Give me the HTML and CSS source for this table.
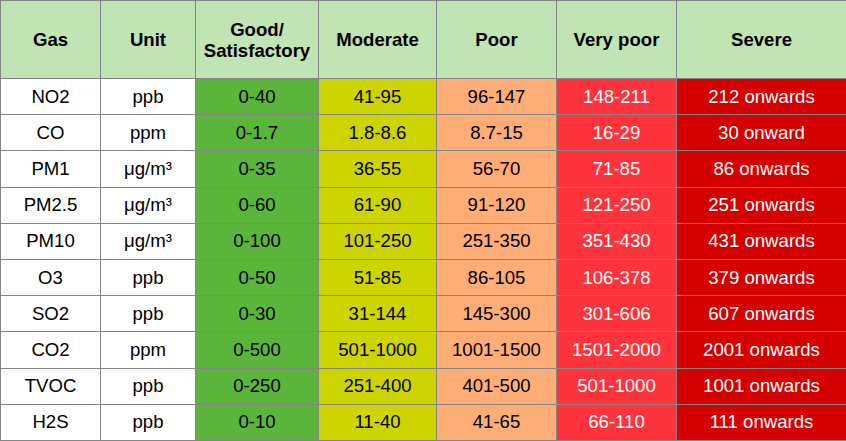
FILE: index.html
```html
<!DOCTYPE html>
<html lang="en">
<head>
<meta charset="utf-8">
<title>Gas levels</title>
<link rel="stylesheet" href="styles.css">
</head>
<body>
<table class="aqi">
  <colgroup>
    <col class="c-gas"><col class="c-unit"><col class="c-good"><col class="c-mod"><col class="c-poor"><col class="c-vpoor"><col class="c-sev">
  </colgroup>
  <thead>
    <tr>
      <th>Gas</th><th>Unit</th><th>Good/<br>Satisfactory</th><th>Moderate</th><th>Poor</th><th>Very poor</th><th>Severe</th>
    </tr>
  </thead>
  <tbody>
    <tr><td>NO2</td><td>ppb</td><td class="good">0-40</td><td class="mod">41-95</td><td class="poor">96-147</td><td class="vpoor">148-211</td><td class="sev">212 onwards</td></tr>
    <tr><td>CO</td><td>ppm</td><td class="good">0-1.7</td><td class="mod">1.8-8.6</td><td class="poor">8.7-15</td><td class="vpoor">16-29</td><td class="sev">30 onward</td></tr>
    <tr><td>PM1</td><td>μg/m³</td><td class="good">0-35</td><td class="mod">36-55</td><td class="poor">56-70</td><td class="vpoor">71-85</td><td class="sev">86 onwards</td></tr>
    <tr><td>PM2.5</td><td>μg/m³</td><td class="good">0-60</td><td class="mod">61-90</td><td class="poor">91-120</td><td class="vpoor">121-250</td><td class="sev">251 onwards</td></tr>
    <tr><td>PM10</td><td>μg/m³</td><td class="good">0-100</td><td class="mod">101-250</td><td class="poor">251-350</td><td class="vpoor">351-430</td><td class="sev">431 onwards</td></tr>
    <tr><td>O3</td><td>ppb</td><td class="good">0-50</td><td class="mod">51-85</td><td class="poor">86-105</td><td class="vpoor">106-378</td><td class="sev">379 onwards</td></tr>
    <tr><td>SO2</td><td>ppb</td><td class="good">0-30</td><td class="mod">31-144</td><td class="poor">145-300</td><td class="vpoor">301-606</td><td class="sev">607 onwards</td></tr>
    <tr><td>CO2</td><td>ppm</td><td class="good">0-500</td><td class="mod">501-1000</td><td class="poor">1001-1500</td><td class="vpoor">1501-2000</td><td class="sev">2001 onwards</td></tr>
    <tr><td>TVOC</td><td>ppb</td><td class="good">0-250</td><td class="mod">251-400</td><td class="poor">401-500</td><td class="vpoor">501-1000</td><td class="sev">1001 onwards</td></tr>
    <tr><td>H2S</td><td>ppb</td><td class="good">0-10</td><td class="mod">11-40</td><td class="poor">41-65</td><td class="vpoor">66-110</td><td class="sev">111 onwards</td></tr>
  </tbody>
</table>
</body>
</html>
```

FILE: styles.css
```css
html, body {
  margin: 0;
  padding: 0;
  background: #ffffff;
}

.aqi {
  border-collapse: collapse;
  table-layout: fixed;
  width: 846px;
  height: 441px;
  font-family: "Liberation Sans", Arial, sans-serif;
  font-size: 18.6px;
  color: #000000;
}

.c-gas { width: 100px; }
.c-unit { width: 95px; }
.c-good { width: 123px; }
.c-mod { width: 118px; }
.c-poor { width: 120px; }
.c-vpoor { width: 120px; }
.c-sev { width: 170px; }

.aqi th,
.aqi td {
  border: 1px solid #858585;
  padding: 0;
  text-align: center;
  vertical-align: middle;
}

.aqi th {
  background: #c1e4b5;
  font-weight: bold;
  height: 77px;
  line-height: 21px;
}

.aqi td {
  height: 35px;
  line-height: 20px;
  background: #ffffff;
}

.aqi td.good { background: #5bb53a; }
.aqi td.mod { background: #cdd400; }
.aqi td.poor { background: #ffad76; }
.aqi td.vpoor { background: #ff333b; color: #ffffff; }
.aqi td.sev { background: #d50000; color: #ffffff; }
```
